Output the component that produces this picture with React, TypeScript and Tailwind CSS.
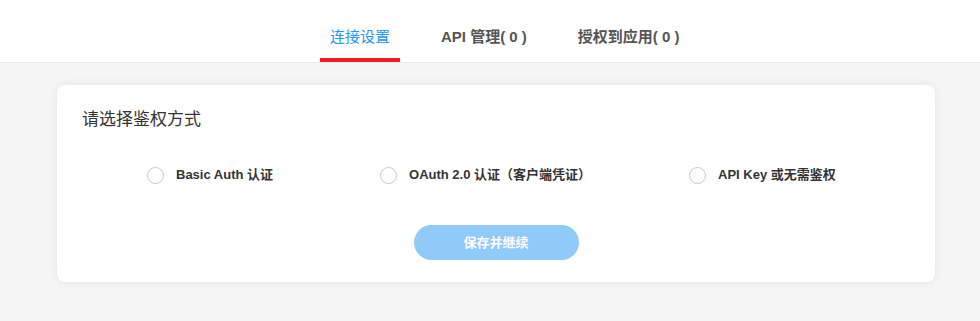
import { useState, JSX } from 'react';

const tabs = ['连接设置', 'API 管理( 0 )', '授权到应用( 0 )'];

const options = [
  { id: 'basic', label: 'Basic Auth 认证', ml: 'ml-0' },
  { id: 'oauth', label: 'OAuth 2.0 认证（客户端凭证）', ml: 'ml-[107px]' },
  { id: 'apikey', label: 'API Key 或无需鉴权', ml: 'ml-[98px]' },
];

export default function App(): JSX.Element {
  const [active, setActive] = useState<number>(0);
  const [auth, setAuth] = useState<string>('');

  return (
    <div
      className="min-h-screen bg-[#f5f5f5]"
      style={{ fontFamily: '"Liberation Sans", "Noto Sans CJK SC", sans-serif' }}
    >
      {/* Tabs */}
      <div className="h-[63px] bg-white border-b border-[#ebebeb] flex pl-[320px] gap-[31px]">
        {tabs.map((t, i) => (
          <button
            key={t}
            onClick={() => setActive(i)}
            className="h-[62px] flex flex-col justify-between items-stretch"
          >
            <span
              className={
                'mt-[27px] px-[10px] leading-5 text-[15px] ' +
                (i === active ? 'text-[#2196f3]' : 'text-[#555] font-bold')
              }
            >
              {t}
            </span>
            <span className={'h-1 ' + (i === active ? 'bg-[#ee1c25]' : 'bg-transparent')} />
          </button>
        ))}
      </div>

      {/* Card */}
      <div className="ml-[57px] mt-[22px] w-[878px] h-[197px] bg-white rounded-lg shadow-[0_0_10px_rgba(0,0,0,0.08)] pt-[25px] px-[25px]">
        <h2 className="text-[17px] leading-5 text-[#333]">请选择鉴权方式</h2>

        <div className="mt-[35px] flex pl-[65px]">
          {options.map((o) => (
            <label key={o.id} className={'flex items-center gap-3 cursor-pointer ' + o.ml}>
              <span
                onClick={() => setAuth(o.id)}
                className={
                  'w-[17px] h-[17px] rounded-full border flex items-center justify-center ' +
                  (auth === o.id ? 'border-[#2196f3]' : 'border-[#c8c8c8]')
                }
              >
                {auth === o.id && <span className="w-[9px] h-[9px] rounded-full bg-[#2196f3]" />}
              </span>
              <span className="text-[13px] font-bold text-[#333] leading-5">{o.label}</span>
            </label>
          ))}
        </div>

        <div className="mt-[40px] flex justify-center">
          <button className="w-[165px] h-[35px] rounded-full bg-[#90caf9] text-white text-[13px] font-bold">
            保存并继续
          </button>
        </div>
      </div>
    </div>
  );
}
